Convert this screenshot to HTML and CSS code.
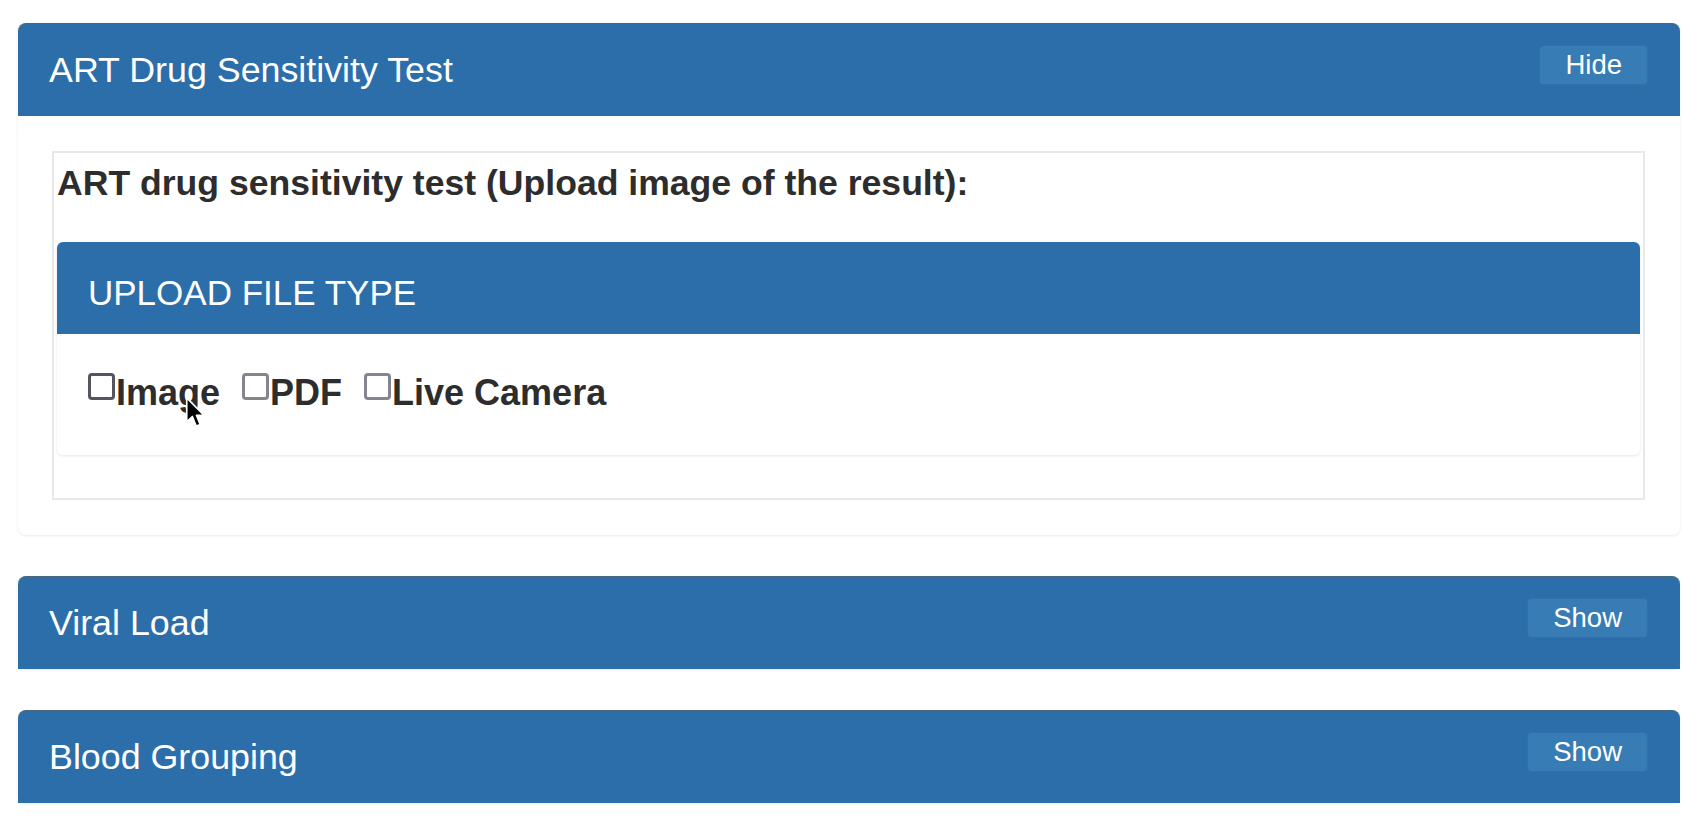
FILE: index.html
```html
<!DOCTYPE html>
<html lang="en">
<head>
<meta charset="utf-8">
<title>ART Drug Sensitivity Test</title>
<link rel="stylesheet" href="styles.css">
</head>
<body>
<main class="page">
  <section class="panel">
    <header class="panel-heading">
      <h2 class="panel-title">ART Drug Sensitivity Test</h2>
      <button class="toggle-btn" type="button">Hide</button>
    </header>
    <div class="panel-body">
      <div class="field-box">
        <label class="field-label">ART drug sensitivity test (Upload image of the result):</label>
        <div class="upload-card">
          <div class="upload-heading">UPLOAD FILE TYPE</div>
          <div class="upload-body">
            <label class="option"><span class="check check-hover"></span>Image</label>
            <label class="option"><span class="check"></span>PDF</label>
            <label class="option"><span class="check"></span>Live Camera</label>
          </div>
        </div>
      </div>
    </div>
  </section>

  <section class="panel collapsed">
    <header class="panel-heading">
      <h2 class="panel-title">Viral Load</h2>
      <button class="toggle-btn" type="button">Show</button>
    </header>
  </section>

  <section class="panel collapsed">
    <header class="panel-heading">
      <h2 class="panel-title">Blood Grouping</h2>
      <button class="toggle-btn" type="button">Show</button>
    </header>
  </section>
</main>
<svg class="cursor" width="21" height="33" viewBox="0 0 18 28" aria-hidden="true">
  <path d="M1.5 1.5 L1.5 22 L6.3 17.4 L9.6 25.6 L13 24.2 L9.8 16.4 L16.2 16.4 Z" fill="#000" stroke="#fff" stroke-width="1.4" stroke-linejoin="round"/>
</svg>
</body>
</html>
```

FILE: styles.css
```css
* {
  box-sizing: border-box;
}

html, body {
  margin: 0;
  padding: 0;
  background: #ffffff;
}

body {
  position: relative;
  font-family: "Liberation Sans", Arial, Helvetica, sans-serif;
  color: #2d2d2d;
  width: 1702px;
  height: 818px;
  overflow: hidden;
}

.page {
  padding: 23px 22px 0 18px;
  display: flex;
  flex-direction: column;
  gap: 41px;
}

.panel {
  background: #ffffff;
  border-radius: 8px;
  box-shadow: 0 1px 3px rgba(0, 0, 0, 0.09);
}

.panel-heading {
  height: 93px;
  background: #2c6ea9;
  border-top: 1px solid #4a6678;
  border-radius: 8px 8px 0 0;
  padding: 21px 32px 0 31px;
  display: flex;
  justify-content: space-between;
  align-items: flex-start;
}

.panel-title {
  margin: 5px 0 0 0;
  font-size: 35.8px;
  line-height: 40px;
  font-weight: normal;
  color: #ffffff;
}

.toggle-btn {
  height: 40px;
  padding: 0 25px;
  border: 1px solid #3171a9;
  border-radius: 4px;
  background: #377cb4;
  color: #ffffff;
  font-family: "Liberation Sans", Arial, Helvetica, sans-serif;
  font-size: 27.5px;
  line-height: 38px;
}

.panel-body {
  padding: 35px 35px 35px 34px;
}

.field-box {
  border: 2px solid #e8e8e8;
  padding: 10px 3px 43px 3px;
}

.field-label {
  display: block;
  font-size: 35.6px;
  line-height: 40px;
  font-weight: bold;
  margin-bottom: 39px;
}

.upload-card {
  border-radius: 6px;
  background: #ffffff;
  box-shadow: 0 1px 3px rgba(0, 0, 0, 0.1);
}

.upload-heading {
  height: 92px;
  background: #2c6ea9;
  border-radius: 6px 6px 0 0;
  color: #ffffff;
  font-size: 35px;
  line-height: 40px;
  padding: 31px 31px 0 31px;
}

.upload-body {
  padding: 39px 30px 42px 31px;
  display: flex;
  gap: 22px;
}

.option {
  display: flex;
  align-items: flex-start;
  font-size: 36px;
  line-height: 40px;
  font-weight: bold;
  color: #2d2d2d;
}

.check {
  width: 27px;
  height: 27px;
  border: 3px solid #85858f;
  border-radius: 4px;
  background: #ffffff;
  margin-right: 1px;
  flex: none;
}

.check-hover {
  border-color: #55555f;
}

.cursor {
  position: absolute;
  left: 185px;
  top: 396px;
}
```
